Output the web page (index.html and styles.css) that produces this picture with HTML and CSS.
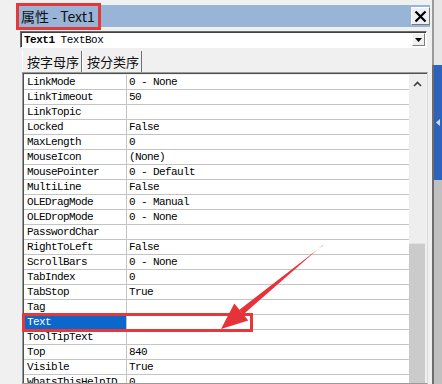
FILE: index.html
```html
<html>
  <head>
    <link rel="stylesheet" href="styles.css">
    <title>属性 - Text1</title>
  </head>
  <body>
    <div class="screen">
      <div class="gutter"></div>
      <div class="win">
        <div class="titlebar">
          <span class="title">属性 - Text1</span>
          <span class="close">
            <svg width="13" height="13" viewBox="0 0 13 13"><path d="M1.5 1.5 L11.5 11.5 M11.5 1.5 L1.5 11.5" stroke="#000" stroke-width="2.2"/></svg>
          </span>
        </div>
        <div class="combo">
          <span class="combo-text"><b>Text1</b> TextBox</span>
          <span class="drop">
            <svg width="7" height="4" viewBox="0 0 7 4"><path d="M0 0 H7 L3.5 4 Z" fill="#000"/></svg>
          </span>
        </div>
        <div class="tabs">
          <span class="tab active">按字母序</span>
          <span class="tab">按分类序</span>
        </div>
        <div class="grid">
          <div class="rows">
            <div class="row"><span class="name">LinkMode</span><span class="val">0 - None</span></div>
            <div class="row"><span class="name">LinkTimeout</span><span class="val">50</span></div>
            <div class="row"><span class="name">LinkTopic</span><span class="val"></span></div>
            <div class="row"><span class="name">Locked</span><span class="val">False</span></div>
            <div class="row"><span class="name">MaxLength</span><span class="val">0</span></div>
            <div class="row"><span class="name">MouseIcon</span><span class="val">(None)</span></div>
            <div class="row"><span class="name">MousePointer</span><span class="val">0 - Default</span></div>
            <div class="row"><span class="name">MultiLine</span><span class="val">False</span></div>
            <div class="row"><span class="name">OLEDragMode</span><span class="val">0 - Manual</span></div>
            <div class="row"><span class="name">OLEDropMode</span><span class="val">0 - None</span></div>
            <div class="row"><span class="name">PasswordChar</span><span class="val"></span></div>
            <div class="row"><span class="name">RightToLeft</span><span class="val">False</span></div>
            <div class="row"><span class="name">ScrollBars</span><span class="val">0 - None</span></div>
            <div class="row"><span class="name">TabIndex</span><span class="val">0</span></div>
            <div class="row"><span class="name">TabStop</span><span class="val">True</span></div>
            <div class="row"><span class="name">Tag</span><span class="val"></span></div>
            <div class="row sel"><span class="name">Text</span><span class="val"></span></div>
            <div class="row"><span class="name">ToolTipText</span><span class="val"></span></div>
            <div class="row"><span class="name">Top</span><span class="val">840</span></div>
            <div class="row"><span class="name">Visible</span><span class="val">True</span></div>
            <div class="row"><span class="name">WhatsThisHelpID</span><span class="val">0</span></div>
          </div>
          <div class="scroll">
            <span class="up">
              <svg width="9" height="6" viewBox="0 0 9 6"><path d="M1 5 L4.5 1.5 L8 5" fill="none" stroke="#404040" stroke-width="1.6"/></svg>
            </span>
            <div class="thumb"></div>
          </div>
        </div>
      </div>
      <div class="side">
        <div class="side-top"></div>
        <div class="side-blue">
          <svg width="4" height="7" viewBox="0 0 4 7"><path d="M4 0 V7 L0 3.5 Z" fill="#cfe0ff"/></svg>
        </div>
        <div class="side-rest"></div>
      </div>

      <div class="note note-title"></div>
      <div class="note note-row"></div>
      <svg class="arrow" width="442" height="384" viewBox="0 0 442 384">
        <path d="M323.6 244.2 L322.4 245.8 L239.4 309.8 L243.2 314.4 Z" fill="#e8323a"/>
        <path d="M221 329 L234.3 303.6 L248.3 320.6 Z" fill="#e8323a"/>
      </svg>
    </div>
  </body>
</html>
```

FILE: styles.css
```css
body {
  margin: 0;
  background: #f0f0f0;
  font-family: "Liberation Mono", monospace;
  overflow: hidden;
}

.screen {
  position: relative;
  display: flex;
  width: 442px;
  height: 384px;
  overflow: hidden;
}
.gutter {
  width: 17px;
  flex: none;
}

.win {
  width: 415px;
  flex: none;
  display: flex;
  flex-direction: column;
  padding-top: 5px;
  box-sizing: border-box;
}

.titlebar {
  height: 22px;
  margin-right: 2px;
  background: #98b4d6;
  display: flex;
  align-items: center;
  justify-content: space-between;
}
.title {
  font-family: "Noto Sans CJK SC", sans-serif;
  font-size: 14px;
  line-height: 22px;
  padding-left: 4px;
  color: #111;
}
.close {
  width: 19px;
  height: 18px;
  box-sizing: border-box;
  border: 1px solid #fff;
  border-right-color: #7a7a7a;
  border-bottom-color: #7a7a7a;
  background: #eef0f3;
  display: flex;
  align-items: center;
  justify-content: center;
}

.combo {
  margin: 4px 5px 0 3px;
  height: 17px;
  box-sizing: border-box;
  border: 1px solid #fff;
  border-top-color: #6a6a6a;
  border-left-color: #6a6a6a;
  box-shadow: inset 1px 1px 0 #404040;
  background: #fff;
  display: flex;
  align-items: center;
  justify-content: space-between;
}
.combo-text {
  font-size: 11px;
  letter-spacing: -0.5px;
  padding-left: 3px;
  color: #000;
}
.drop {
  width: 13px;
  height: 13px;
  margin-right: 1px;
  box-sizing: border-box;
  background: #f0f0f0;
  border: 1px solid #fff;
  border-right-color: #808080;
  border-bottom-color: #808080;
  display: flex;
  align-items: center;
  justify-content: center;
}

.tabs {
  height: 24px;
  margin-left: 5px;
  display: flex;
  align-items: flex-end;
}
.tab {
  font-family: "Noto Sans CJK SC", sans-serif;
  font-size: 13px;
  height: 21px;
  line-height: 21px;
  padding: 0 2px 0 4px;
  border-left: 1px solid #fff;
  border-right: 1px solid #707070;
  color: #111;
}

.grid {
  flex: 1;
  margin: 0 4px 0 5px;
  display: flex;
  border: 1px solid #9a9a9a;
  border-right-color: #dadada;
  box-shadow: inset 1px 1px 0 #505050;
  padding: 2px 2px 0 1px;
  background: #f0f0f0;
  overflow: hidden;
}
.rows {
  flex: 1;
  background: #fff;
}
.row {
  display: flex;
  height: 15px;
  box-sizing: border-box;
  border-bottom: 1px solid #c4c4c4;
  font-size: 11px;
  line-height: 14px;
  letter-spacing: -0.6px;
  color: #000;
  white-space: nowrap;
}
.name {
  width: 103px;
  flex: none;
  box-sizing: border-box;
  border-right: 1px solid #c4c4c4;
  padding-left: 3px;
}
.val {
  padding-left: 2px;
}
.row.sel .name {
  background: #0b67cc;
  color: #fff;
}

.scroll {
  width: 16px;
  flex: none;
  display: flex;
  flex-direction: column;
  background: #eeeeee;
}
.up {
  height: 17px;
  display: flex;
  align-items: center;
  justify-content: center;
}
.thumb {
  flex: 1;
  margin-top: 151px;
  background: #cbcbcb;
  border-top: 1px solid #e2e2e2;
}

.side {
  width: 10px;
  flex: none;
  display: flex;
  flex-direction: column;
}
.side-top {
  height: 65px;
  background: #e6e6e6;
  border-left: 2px solid #9a9a9a;
}
.side-blue {
  height: 115px;
  background: #2d63bd;
  border-left: 2px solid #6d6d6d;
  display: flex;
  align-items: center;
  padding-left: 2px;
}
.side-rest {
  flex: 1;
  background: #c0c0c0;
  border-left: 2px solid #6d6d6d;
}

.note {
  position: absolute;
  box-sizing: border-box;
  border: 3px solid #e5383b;
}
.note-title {
  left: 16px;
  top: 3px;
  width: 85px;
  height: 27px;
}
.note-row {
  left: 22px;
  top: 313px;
  width: 231px;
  height: 19px;
}
.arrow {
  position: absolute;
  left: 0;
  top: 0;
  pointer-events: none;
}
```
